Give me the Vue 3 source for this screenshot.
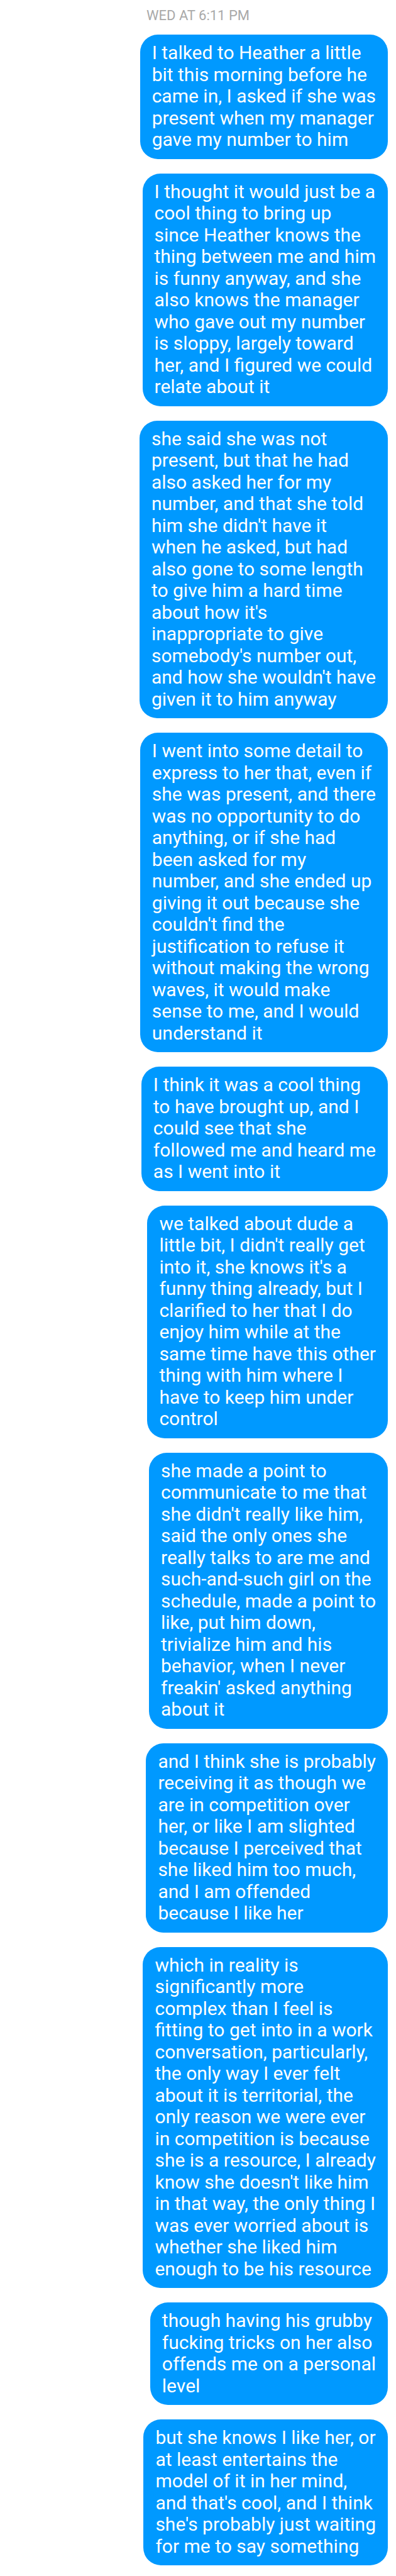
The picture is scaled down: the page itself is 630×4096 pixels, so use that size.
<script setup>
const messages = [
  [
    "I talked to Heather a little",
    "bit this morning before he",
    "came in, I asked if she was",
    "present when my manager",
    "gave my number to him",
  ],
  [
    "I thought it would just be a",
    "cool thing to bring up",
    "since Heather knows the",
    "thing between me and him",
    "is funny anyway, and she",
    "also knows the manager",
    "who gave out my number",
    "is sloppy, largely toward",
    "her, and I figured we could",
    "relate about it",
  ],
  [
    "she said she was not",
    "present, but that he had",
    "also asked her for my",
    "number, and that she told",
    "him she didn't have it",
    "when he asked, but had",
    "also gone to some length",
    "to give him a hard time",
    "about how it's",
    "inappropriate to give",
    "somebody's number out,",
    "and how she wouldn't have",
    "given it to him anyway",
  ],
  [
    "I went into some detail to",
    "express to her that, even if",
    "she was present, and there",
    "was no opportunity to do",
    "anything, or if she had",
    "been asked for my",
    "number, and she ended up",
    "giving it out because she",
    "couldn't find the",
    "justification to refuse it",
    "without making the wrong",
    "waves, it would make",
    "sense to me, and I would",
    "understand it",
  ],
  [
    "I think it was a cool thing",
    "to have brought up, and I",
    "could see that she",
    "followed me and heard me",
    "as I went into it",
  ],
  [
    "we talked about dude a",
    "little bit, I didn't really get",
    "into it, she knows it's a",
    "funny thing already, but I",
    "clarified to her that I do",
    "enjoy him while at the",
    "same time have this other",
    "thing with him where I",
    "have to keep him under",
    "control",
  ],
  [
    "she made a point to",
    "communicate to me that",
    "she didn't really like him,",
    "said the only ones she",
    "really talks to are me and",
    "such-and-such girl on the",
    "schedule, made a point to",
    "like, put him down,",
    "trivialize him and his",
    "behavior, when I never",
    "freakin' asked anything",
    "about it",
  ],
  [
    "and I think she is probably",
    "receiving it as though we",
    "are in competition over",
    "her, or like I am slighted",
    "because I perceived that",
    "she liked him too much,",
    "and I am offended",
    "because I like her",
  ],
  [
    "which in reality is",
    "significantly more",
    "complex than I feel is",
    "fitting to get into in a work",
    "conversation, particularly,",
    "the only way I ever felt",
    "about it is territorial, the",
    "only reason we were ever",
    "in competition is because",
    "she is a resource, I already",
    "know she doesn't like him",
    "in that way, the only thing I",
    "was ever worried about is",
    "whether she liked him",
    "enough to be his resource",
  ],
  [
    "though having his grubby",
    "fucking tricks on her also",
    "offends me on a personal",
    "level",
  ],
  [
    "but she knows I like her, or",
    "at least entertains the",
    "model of it in her mind,",
    "and that's cool, and I think",
    "she's probably just waiting",
    "for me to say something",
  ],
].map((lines) => lines.join("\n"));
</script>

<template>
  <main class="thread">
    <time class="stamp">WED AT 6:11 PM</time>
    <ol class="messages">
      <li v-for="(text, i) in messages" :key="i" class="bubble">{{ text }}</li>
    </ol>
  </main>
</template>

<style>
body {
  margin: 0;
  background: #fff;
}
</style>

<style scoped>
.thread {
  display: flex;
  flex-direction: column;
  padding: 12px 13px 21px;
  font-family: Roboto, "Liberation Sans", sans-serif;
}

.stamp {
  margin-bottom: 17px;
  color: #a9a9a9;
  font-size: 22px;
  line-height: 26px;
  text-align: center;
}

.messages {
  display: flex;
  flex-direction: column;
  align-items: flex-end;
  gap: 23px;
  margin: 0;
  padding: 0;
  list-style: none;
}

.bubble {
  max-width: 75%;
  box-sizing: border-box;
  padding: 12px 19px 13px;
  border-radius: 28px;
  background: #0099ff;
  color: #fff;
  font-size: 30px;
  line-height: 1.15;
  white-space: pre-line;
}
</style>
